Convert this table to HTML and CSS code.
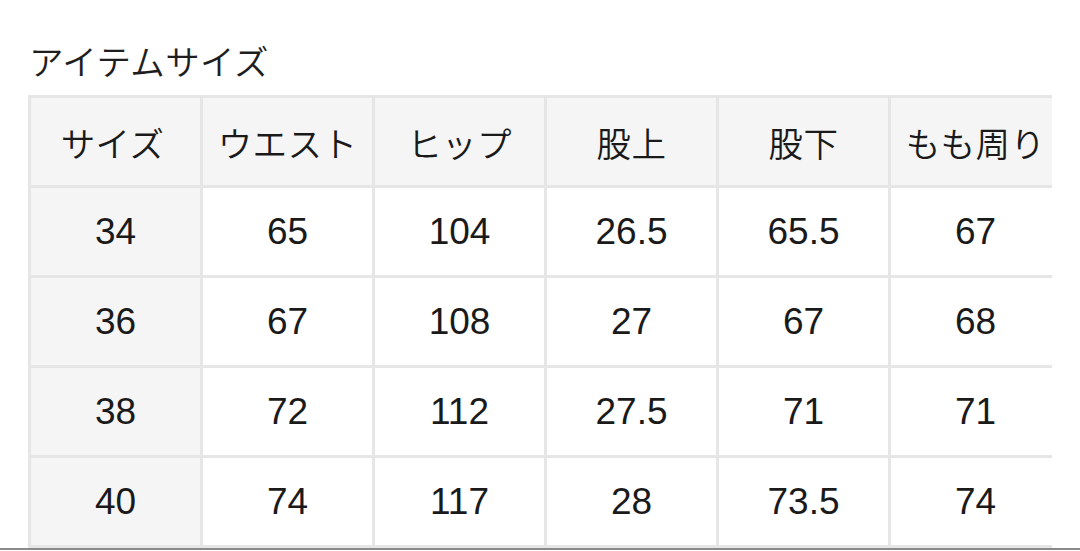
FILE: index.html
```html
<!DOCTYPE html>
<html lang="ja">
<head>
<meta charset="utf-8">
<link rel="stylesheet" href="styles.css">
</head>
<body>
<div class="page">
  <h2 class="title">アイテムサイズ</h2>
  <div class="scroller">
    <div class="grid">
      <div class="cell head jp">サイズ</div>
      <div class="cell head jp">ウエスト</div>
      <div class="cell head jp">ヒップ</div>
      <div class="cell head jp">股上</div>
      <div class="cell head jp">股下</div>
      <div class="cell head jp">もも周り</div>

      <div class="cell side">34</div>
      <div class="cell">65</div>
      <div class="cell">104</div>
      <div class="cell">26.5</div>
      <div class="cell">65.5</div>
      <div class="cell">67</div>

      <div class="cell side">36</div>
      <div class="cell">67</div>
      <div class="cell">108</div>
      <div class="cell">27</div>
      <div class="cell">67</div>
      <div class="cell">68</div>

      <div class="cell side">38</div>
      <div class="cell">72</div>
      <div class="cell">112</div>
      <div class="cell">27.5</div>
      <div class="cell">71</div>
      <div class="cell">71</div>

      <div class="cell side">40</div>
      <div class="cell">74</div>
      <div class="cell">117</div>
      <div class="cell">28</div>
      <div class="cell">73.5</div>
      <div class="cell">74</div>
    </div>
  </div>
</div>
<div class="bottom-rule"></div>
</body>
</html>
```

FILE: styles.css
```css
* { box-sizing: border-box; }
html, body {
  margin: 0;
  padding: 0;
  background: #ffffff;
}
body {
  width: 1080px;
  height: 551px;
  overflow: hidden;
  font-family: "Liberation Sans", "Noto Sans CJK JP", sans-serif;
  color: #1e1e1e;
}
.page {
  padding: 40px 0 0 28px;
  height: 548px;
}
.title {
  margin: 0 0 14px 1px;
  font-family: "Noto Sans CJK JP", sans-serif;
  font-weight: 350;
  font-size: 34.5px;
  line-height: 41px;
  letter-spacing: 0.4px;
  color: #1e1e1e;
}
.scroller {
  width: 1024px;
  overflow: hidden;
}
.grid {
  display: grid;
  grid-template-columns: repeat(6, 172px);
  grid-auto-rows: 90px;
  width: max-content;
  border-top: 3px solid #e6e6e6;
  border-left: 3px solid #e6e6e6;
}
.cell {
  display: flex;
  align-items: center;
  justify-content: center;
  border-right: 3px solid #e6e6e6;
  border-bottom: 3px solid #e6e6e6;
  font-size: 37px;
  background: #ffffff;
  color: #1a1a1a;
}
.head {
  background: #f5f5f5;
}
.side {
  background: #f5f5f5;
}
.jp {
  font-family: "Noto Sans CJK JP", sans-serif;
  font-weight: 350;
  font-size: 34.5px;
  letter-spacing: 0.4px;
}
.grid .cell:first-child {
  padding-right: 6px;
}
.bottom-rule {
  height: 2px;
  background: #8a8a8a;
}
```
